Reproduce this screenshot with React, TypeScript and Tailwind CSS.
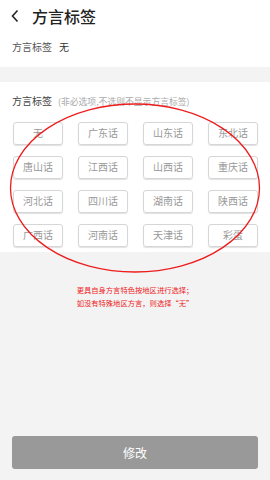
import React from "react";

const items = [
  "无", "广东话", "山东话", "东北话",
  "唐山话", "江西话", "山西话", "重庆话",
  "河北话", "四川话", "湖南话", "陕西话",
  "广西话", "河南话", "天津话", "彩蛋",
];

export default function App() {
  return (
    <div
      className="relative w-[270px] h-[480px] bg-[#f3f3f3] flex flex-col overflow-hidden"
      style={{ fontFamily: '"Noto Sans CJK SC", "Noto Sans", sans-serif' }}
    >
      <div className="bg-white h-[67px] flex flex-col">
        <div className="h-[30px] flex items-center pl-[10px] pt-[1px]">
          <svg width="10" height="14" viewBox="0 0 10 14" className="mr-[12px]">
            <path d="M7.5 1.5 L2.5 7 L7.5 12.5" fill="none" stroke="#222" strokeWidth="1.6" />
          </svg>
          <span className="text-[16px] leading-none text-[#222] font-medium">方言标签</span>
        </div>
        <div className="flex items-center pl-[12px] mt-[12px] text-[10px] leading-none">
          <span className="text-[#555]">方言标签</span>
          <span className="text-[#333] ml-[7px]">无</span>
        </div>
      </div>
      <div className="h-[15px]" />
      <div className="bg-white pt-[14px] pb-[5px]">
        <div className="flex items-baseline pl-[12px] leading-none">
          <span className="text-[10px] text-[#444]">方言标签</span>
          <span className="text-[8.8px] text-[#aaa] ml-[6px]">(非必选项,不选则不显示方言标签)</span>
        </div>
        <div className="grid grid-cols-[50px_50px_50px_50px] gap-x-[15px] gap-y-[11px] pl-[13px] mt-[15px]">
          {items.map((t) => (
            <div
              key={t}
              className="h-[23px] flex items-center justify-center border border-[#d6d6d6] rounded-[3px] shadow-[0_1px_1px_rgba(0,0,0,0.12)] text-[10px] text-[#999] leading-none"
            >
              {t}
            </div>
          ))}
        </div>
      </div>
      <div className="mt-[32px] flex flex-col items-center text-[7.3px] leading-[13px] text-[#ee2222]">
        <span>更具自身方言特色按地区进行选择；</span>
        <span>如没有特殊地区方言，则选择“无”</span>
      </div>
      <div className="flex-1" />
      <div className="px-[12px] pb-[11px]">
        <div className="h-[33px] bg-[#999999] rounded-[3px] flex items-center justify-center text-white text-[12px]">
          修改
        </div>
      </div>
      <svg className="absolute left-0 top-0 pointer-events-none" width="270" height="480">
        <ellipse cx="135" cy="188" rx="124.5" ry="84" fill="none" stroke="#ee1c1c" strokeWidth="1.3" />
      </svg>
    </div>
  );
}
